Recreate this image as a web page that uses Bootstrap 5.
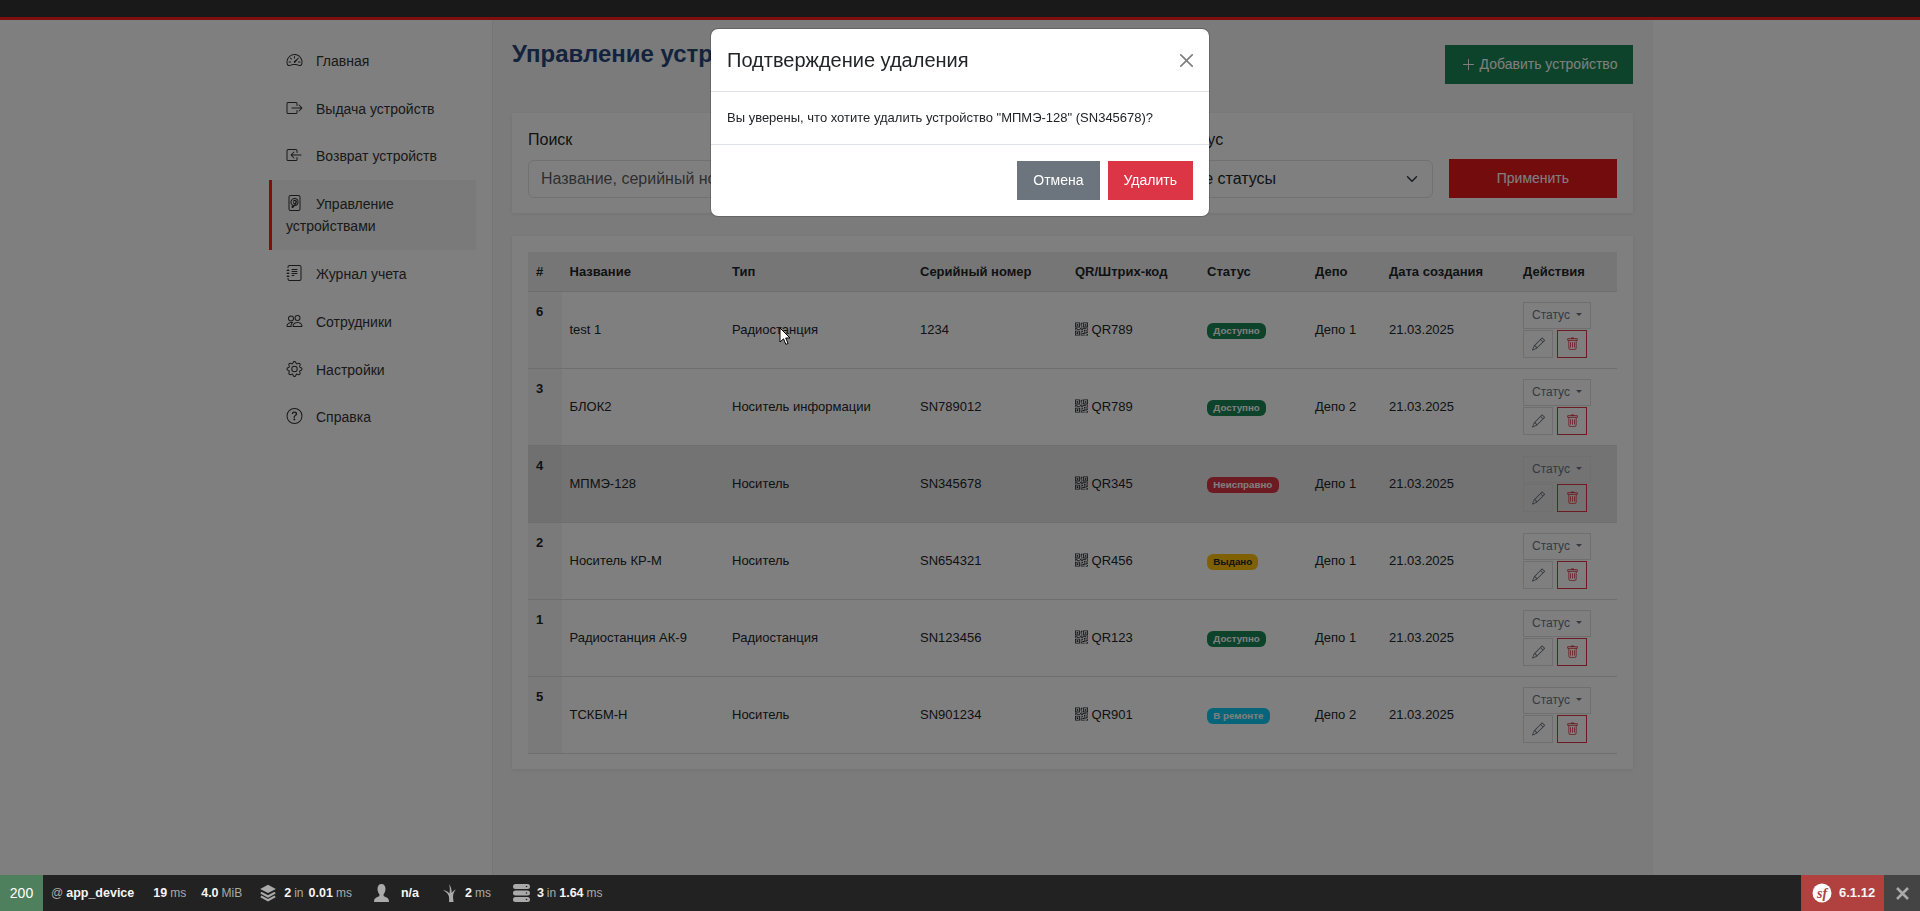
<!DOCTYPE html>
<html lang="ru">
  <head>
    <meta charset="UTF-8" />
    <meta name="viewport" content="width=device-width, initial-scale=1.0" />
    <title>Управление устройствами</title>
    <link rel="stylesheet" href="https://cdn.jsdelivr.net/npm/bootstrap@5.3.0/dist/css/bootstrap.min.css" />
    <style>
      html, body {
        height: 100%;
        overflow: hidden;
      }
      body {
        font-family: "Liberation Sans", Arial, sans-serif;
        background-color: #fff;
        color: #212529;
      }
      .top-strip {
        height: 20px;
        background-color: #333;
        border-bottom: 3px solid #fa1e1e;
      }
      .page-wrap {
        height: 891px;
      }
      .side-col {
        width: 493px;
        padding: 17px 16px 0 269px;
        background-color: #fff;
        border-right: 1px solid #eaeaea;
      }
      .side-link {
        display: block;
        padding: 12.9px 14px 12.9px 14px;
        border-left: 3px solid transparent;
        font-size: 14px;
        line-height: 22px;
        color: #333;
        text-decoration: none;
      }
      .side-link.is-active {
        background-color: #f5f5f5;
        border-left-color: #fa1e1e;
      }
      .side-link svg {
        width: 17px;
        height: 16px;
        margin-right: 13px;
        vertical-align: -2px;
      }
      .main-col {
        width: 1160px;
        padding: 16px 20px 0 19px;
        background-color: #f6f6f6;
      }
      .page-title {
        font-size: 24px;
        font-weight: 700;
        line-height: 36px;
        margin: 0;
        color: #28477a;
      }
      .head-row {
        margin-bottom: 29px;
      }
      .btn-flat {
        border-radius: 0;
        font-size: 14px;
        line-height: 21px;
        padding: 8px 15px;
      }
      .add-btn {
        margin-top: 9px;
        width: 188px;
      }
      .apply-btn {
        background-color: #e61919;
        border-color: #e61919;
        color: #fff;
      }
      .panel-box {
        background-color: #fff;
        border: 0;
        border-radius: 0;
        box-shadow: 0 1px 3px rgba(0, 0, 0, 0.08);
      }
      .filter-box {
        height: 100px;
        padding: 16px;
        margin-bottom: 23px;
      }
      .filter-box label {
        font-size: 16px;
        margin-bottom: 8px;
        line-height: 24px;
        display: block;
        margin-top: -1px;
      }
      .filter-box .form-control,
      .filter-box .form-select {
        height: 38px;
        font-size: 16px;
      }
      .table-box {
        padding: 16px 15px 15px 16px;
      }
      .dev-table {
        font-size: 13px;
        margin-bottom: 0;
        table-layout: fixed;
        width: 1089px;
      }
      .dev-table th,
      .dev-table td {
        padding: 10px 8px;
        line-height: 19.5px;
      }
      .dev-table thead th {
        background-color: #ededed;
        border-bottom: 1px solid #dcdcdc;
        line-height: 19px;
      }
      .dev-table thead th:nth-child(1) { width: 33.5px; }
      .dev-table thead th:nth-child(2) { width: 162.5px; }
      .dev-table thead th:nth-child(3) { width: 188px; }
      .dev-table thead th:nth-child(4) { width: 155px; }
      .dev-table thead th:nth-child(5) { width: 132px; }
      .dev-table thead th:nth-child(6) { width: 108px; }
      .dev-table thead th:nth-child(7) { width: 74px; }
      .dev-table thead th:nth-child(8) { width: 134px; }
      .dev-table thead th:nth-child(9) { width: 102px; }
      .dev-table tbody td {
        vertical-align: middle;
        background-color: transparent;
      }
      .dev-table tbody th {
        background-color: #f5f5f5;
      }
      .dev-table tbody tr {
        border-bottom: 1px solid #dcdcdc;
      }
      .dev-table tbody tr.row-hover td {
        background-color: #e6e6e6;
      }
      .dev-table tbody tr.row-hover th {
        background-color: #e0e0e0;
      }
      .qr-icon {
        width: 13px;
        height: 14px;
        vertical-align: -2px;
      }
      .act-stack {
        width: 72px;
        row-gap: 1px;
      }
      .act-btn {
        border: 1px solid #dedede;
        border-radius: 0;
        background-color: transparent;
        color: #6c757d;
        font-size: 12px;
        line-height: 18px;
        padding: 3px 0 4px 8px;
        height: 27px;
        width: 68px;
        text-align: left;
      }
      .act-btn.dropdown-toggle::after {
        margin-left: 6px;
      }
      .act-icon {
        width: 30px;
        height: 28px;
        padding: 0;
        display: flex;
        align-items: center;
        justify-content: center;
      }
      .act-icon svg {
        width: 13px;
        height: 14px;
      }
      .act-del {
        border-color: #dc3545;
        color: #dc3545;
      }
      .dialog-text {
        font-size: 13px;
        line-height: 19.5px;
      }
      .modal-header .btn-close {
        font-size: 13px;
      }
      .sf-bar {
        position: fixed;
        z-index: 2000;
        left: 0;
        right: 0;
        bottom: 0;
        height: 36px;
        background-color: #222;
        color: #aaa;
        font-size: 12px;
        line-height: 36px;
        white-space: nowrap;
      }
      .sf-code {
        width: 43px;
        background-color: #4f805d;
        color: #fff;
        font-size: 14px;
        text-align: center;
      }
      .sf-item {
        display: flex;
        align-items: center;
        gap: 3px;
      }
      .sf-item b {
        color: #f5f5f5;
        font-size: 12.5px;
        font-weight: 700;
      }
      .sf-item svg {
        fill: #aaa;
      }
      .sf-route { margin-left: 8px; }
      .sf-time { margin-left: 19px; }
      .sf-mem { margin-left: 15px; }
      .sf-layers { margin-left: 17px; }
      .sf-layers b:last-of-type { margin-left: 2px; }
      .sf-user { margin-left: 21px; }
      .sf-twig { margin-left: 23px; }
      .sf-db { margin-left: 22px; }
      .sf-ver {
        width: 83px;
        background-color: #b0413e;
        color: #f5f5f5;
        font-size: 13px;
        font-weight: 700;
        gap: 7px;
        padding-left: 11px;
      }
      .sf-close {
        width: 36px;
        background-color: #444;
      }
      .mouse-cursor {
        position: fixed;
        z-index: 1060;
        left: 779px;
        top: 327px;
      }
    </style>
  </head>
  <body>
    <svg width="0" height="0" class="position-absolute">
      <symbol id="i-home" viewBox="0 0 16 16"><path d="M8 4a.5.5 0 0 1 .5.5V6a.5.5 0 0 1-1 0V4.5A.5.5 0 0 1 8 4zM3.732 5.732a.5.5 0 0 1 .707 0l.915.914a.5.5 0 1 1-.708.708l-.914-.915a.5.5 0 0 1 0-.707zM2 10a.5.5 0 0 1 .5-.5h1.586a.5.5 0 0 1 0 1H2.5A.5.5 0 0 1 2 10zm9.5 0a.5.5 0 0 1 .5-.5h1.5a.5.5 0 0 1 0 1H12a.5.5 0 0 1-.5-.5zm.754-4.246a.389.389 0 0 0-.527-.02L7.547 9.31a.91.91 0 1 0 1.302 1.258l3.434-4.297a.389.389 0 0 0-.029-.518z"/><path fill-rule="evenodd" d="M0 10a8 8 0 1 1 15.547 2.661c-.442 1.253-1.845 1.602-2.932 1.25C11.309 13.488 9.475 13 8 13c-1.474 0-3.31.488-4.615.911-1.087.352-2.49.003-2.932-1.25A7.988 7.988 0 0 1 0 10zm8-7a7 7 0 0 0-6.603 9.329c.203.575.923.876 1.68.63C4.397 12.533 6.358 12 8 12s3.604.532 4.923.96c.757.245 1.477-.056 1.68-.631A7 7 0 0 0 8 3z"/></symbol>
      <symbol id="i-out" viewBox="0 0 16 16"><path fill-rule="evenodd" d="M10 12.5a.5.5 0 0 1-.5.5h-8a.5.5 0 0 1-.5-.5v-9a.5.5 0 0 1 .5-.5h8a.5.5 0 0 1 .5.5v2a.5.5 0 0 0 1 0v-2A1.5 1.5 0 0 0 9.5 2h-8A1.5 1.5 0 0 0 0 3.5v9A1.5 1.5 0 0 0 1.5 14h8a1.5 1.5 0 0 0 1.5-1.5v-2a.5.5 0 0 0-1 0v2z"/><path fill-rule="evenodd" d="M15.854 8.354a.5.5 0 0 0 0-.708l-3-3a.5.5 0 0 0-.708.708L14.293 7.5H5.5a.5.5 0 0 0 0 1h8.793l-2.147 2.146a.5.5 0 0 0 .708.708l3-3z"/></symbol>
      <symbol id="i-in" viewBox="0 0 16 16"><path fill-rule="evenodd" d="M10 3.5a.5.5 0 0 0-.5-.5h-8a.5.5 0 0 0-.5.5v9a.5.5 0 0 0 .5.5h8a.5.5 0 0 0 .5-.5v-2a.5.5 0 0 1 1 0v2A1.5 1.5 0 0 1 9.5 14h-8A1.5 1.5 0 0 1 0 12.5v-9A1.5 1.5 0 0 1 1.5 2h8A1.5 1.5 0 0 1 11 3.5v2a.5.5 0 0 1-1 0v-2z"/><path fill-rule="evenodd" d="M4.146 8.354a.5.5 0 0 1 0-.708l3-3a.5.5 0 1 1 .708.708L5.707 7.5H14.5a.5.5 0 0 1 0 1H5.707l2.147 2.146a.5.5 0 0 1-.708.708l-3-3z"/></symbol>
      <symbol id="i-hdd" viewBox="0 0 16 16"><path d="M2 2a2 2 0 0 1 2-2h8a2 2 0 0 1 2 2v12a2 2 0 0 1-2 2H4a2 2 0 0 1-2-2V2Zm2-1a1 1 0 0 0-1 1v12a1 1 0 0 0 1 1h8a1 1 0 0 0 1-1V2a1 1 0 0 0-1-1H4Z"/><path d="M12 7a4 4 0 0 1-3.900 4l-1.200 1.700a1.100 1.100 0 0 1-1.600-1.600l.8-.6A4 4 0 1 1 12 7Zm-1 0a3 3 0 1 0-3.900 2.900l1.400-1A2 2 0 1 1 10 8l-.9 2A3 3 0 0 0 11 7ZM8 8a1 1 0 1 0 0-2 1 1 0 0 0 0 2Z"/></symbol>
      <symbol id="i-log" viewBox="0 0 16 16"><path d="M5 10.5a.5.5 0 0 1 .5-.5h2a.5.5 0 0 1 0 1h-2a.5.5 0 0 1-.5-.5zm0-2a.5.5 0 0 1 .5-.5h5a.5.5 0 0 1 0 1h-5a.5.5 0 0 1-.5-.5zm0-2a.5.5 0 0 1 .5-.5h5a.5.5 0 0 1 0 1h-5a.5.5 0 0 1-.5-.5zm0-2a.5.5 0 0 1 .5-.5h5a.5.5 0 0 1 0 1h-5a.5.5 0 0 1-.5-.5z"/><path d="M3 0h10a2 2 0 0 1 2 2v12a2 2 0 0 1-2 2H3a2 2 0 0 1-2-2v-1h1v1a1 1 0 0 0 1 1h10a1 1 0 0 0 1-1V2a1 1 0 0 0-1-1H3a1 1 0 0 0-1 1v1H1V2a2 2 0 0 1 2-2z"/><path d="M1 5v-.5a.5.5 0 0 1 1 0V5h.5a.5.5 0 0 1 0 1h-2a.5.5 0 0 1 0-1H1zm0 3v-.5a.5.5 0 0 1 1 0V8h.5a.5.5 0 0 1 0 1h-2a.5.5 0 0 1 0-1H1zm0 3v-.5a.5.5 0 0 1 1 0v.5h.5a.5.5 0 0 1 0 1h-2a.5.5 0 0 1 0-1H1z"/></symbol>
      <symbol id="i-people" viewBox="0 0 16 16"><path d="M15 14s1 0 1-1-1-4-5-4-5 3-5 4 1 1 1 1h8Zm-7.978-1A.261.261 0 0 1 7 12.996c.001-.264.167-1.03.76-1.72C8.312 10.629 9.282 10 11 10c1.717 0 2.687.63 3.24 1.276.593.69.758 1.457.76 1.72l-.008.002a.274.274 0 0 1-.014.002H7.022ZM11 7a2 2 0 1 0 0-4 2 2 0 0 0 0 4Zm3-2a3 3 0 1 1-6 0 3 3 0 0 1 6 0ZM6.936 9.28a5.88 5.88 0 0 0-1.23-.247A7.35 7.35 0 0 0 5 9c-4 0-5 3-5 4 0 .667.333 1 1 1h4.216A2.238 2.238 0 0 1 5 13c0-1.01.377-2.042 1.09-2.904.243-.294.526-.569.846-.816ZM4.92 10A5.493 5.493 0 0 0 4 13H1c0-.26.164-1.03.76-1.724.545-.636 1.492-1.256 3.16-1.275ZM1.5 5.5a3 3 0 1 1 6 0 3 3 0 0 1-6 0Zm3-2a2 2 0 1 0 0 4 2 2 0 0 0 0-4Z"/></symbol>
      <symbol id="i-gear" viewBox="0 0 16 16"><path d="M8 4.754a3.246 3.246 0 1 0 0 6.492 3.246 3.246 0 0 0 0-6.492zM5.754 8a2.246 2.246 0 1 1 4.492 0 2.246 2.246 0 0 1-4.492 0z"/><path d="M9.796 1.343c-.527-1.79-3.065-1.79-3.592 0l-.094.319a.873.873 0 0 1-1.255.52l-.292-.16c-1.64-.892-3.433.902-2.54 2.541l.159.292a.873.873 0 0 1-.52 1.255l-.319.094c-1.79.527-1.79 3.065 0 3.592l.319.094a.873.873 0 0 1 .52 1.255l-.16.292c-.892 1.64.901 3.434 2.541 2.54l.292-.159a.873.873 0 0 1 1.255.52l.094.319c.527 1.79 3.065 1.79 3.592 0l.094-.319a.873.873 0 0 1 1.255-.52l.292.16c1.64.893 3.434-.902 2.54-2.541l-.159-.292a.873.873 0 0 1 .52-1.255l.319-.094c1.79-.527 1.79-3.065 0-3.592l-.319-.094a.873.873 0 0 1-.52-1.255l.16-.292c.893-1.64-.902-3.433-2.541-2.54l-.292.159a.873.873 0 0 1-1.255-.52l-.094-.319zm-2.633.283c.246-.835 1.428-.835 1.674 0l.094.319a1.873 1.873 0 0 0 2.693 1.115l.291-.16c.764-.415 1.6.42 1.184 1.185l-.159.292a1.873 1.873 0 0 0 1.116 2.692l.318.094c.835.246.835 1.428 0 1.674l-.319.094a1.873 1.873 0 0 0-1.115 2.693l.16.291c.415.764-.42 1.6-1.185 1.184l-.291-.159a1.873 1.873 0 0 0-2.693 1.116l-.094.318c-.246.835-1.428.835-1.674 0l-.094-.319a1.873 1.873 0 0 0-2.692-1.115l-.292.16c-.764.415-1.6-.42-1.184-1.185l.159-.291A1.873 1.873 0 0 0 1.945 8.93l-.319-.094c-.835-.246-.835-1.428 0-1.674l.319-.094A1.873 1.873 0 0 0 3.06 4.377l-.16-.292c-.415-.764.42-1.6 1.185-1.184l.292.159a1.873 1.873 0 0 0 2.692-1.115l.094-.319z"/></symbol>
      <symbol id="i-help" viewBox="0 0 16 16"><path d="M8 15A7 7 0 1 1 8 1a7 7 0 0 1 0 14zm0 1A8 8 0 1 0 8 0a8 8 0 0 0 0 16z"/><path d="M5.255 5.786a.237.237 0 0 0 .241.247h.825c.138 0 .248-.113.266-.25.09-.656.54-1.134 1.342-1.134.686 0 1.314.343 1.314 1.168 0 .635-.374.927-.965 1.371-.673.489-1.206 1.06-1.168 1.987l.003.217a.25.25 0 0 0 .25.246h.811a.25.25 0 0 0 .25-.25v-.105c0-.718.273-.927 1.01-1.486.609-.463 1.244-.977 1.244-2.056 0-1.511-1.276-2.241-2.673-2.241-1.267 0-2.655.59-2.75 2.286zm1.557 5.763c0 .533.425.927 1.01.927.609 0 1.028-.394 1.028-.927 0-.552-.42-.94-1.029-.94-.584 0-1.009.388-1.009.94z"/></symbol>
      <symbol id="i-qr" viewBox="0 0 16 16"><path d="M2 2h2v2H2V2Z"/><path d="M6 0v6H0V0h6ZM5 1H1v4h4V1ZM4 12H2v2h2v-2Z"/><path d="M6 10v6H0v-6h6Zm-5 1v4h4v-4H1Zm11-9h2v2h-2V2Z"/><path d="M10 0v6h6V0h-6Zm5 1v4h-4V1h4ZM8 1V0h1v2H8v2H7V1h1Zm0 5V4h1v2H8ZM6 8V7h1V6h1v2h1V7h5v1h-4v1H7V8H6Zm0 0v1H2V8H1v1H0V7h3v1h3Zm10 1h-1V7h1v2Zm-1 0h-1v2h2v-1h-1V9Zm-4 0h2v1h-1v1h-1V9Zm2 3v-1h-1v1h-1v1H9v1h3v-2h1Zm0 0h3v1h-2v1h-1v-2Zm-4-1v1h1v-2H7v1h2Z"/><path d="M7 12h1v3h4v1H7v-4Zm9 2v2h-3v-1h2v-1h1Z"/></symbol>
      <symbol id="i-pencil" viewBox="0 0 16 16"><path d="M12.146.146a.5.5 0 0 1 .708 0l3 3a.5.5 0 0 1 0 .708l-10 10a.5.5 0 0 1-.168.11l-5 2a.5.5 0 0 1-.65-.65l2-5a.5.5 0 0 1 .11-.168l10-10zM11.207 2.5 13.5 4.793 14.793 3.5 12.5 1.207 11.207 2.5zm1.586 3L10.5 3.207 4 9.707V10h.5a.5.5 0 0 1 .5.5v.5h.5a.5.5 0 0 1 .5.5v.5h.293l6.5-6.5zm-9.761 5.175-.106.106-1.528 3.821 3.821-1.528.106-.106A.5.5 0 0 1 5 12.5V12h-.5a.5.5 0 0 1-.5-.5V11h-.5a.5.5 0 0 1-.468-.325z"/></symbol>
      <symbol id="i-trash" viewBox="0 0 16 16"><path d="M5.5 5.5A.5.5 0 0 1 6 6v6a.5.5 0 0 1-1 0V6a.5.5 0 0 1 .5-.5zm2.5 0a.5.5 0 0 1 .5.5v6a.5.5 0 0 1-1 0V6a.5.5 0 0 1 .5-.5zm3 .5a.5.5 0 0 0-1 0v6a.5.5 0 0 0 1 0V6z"/><path fill-rule="evenodd" d="M14.5 3a1 1 0 0 1-1 1H13v9a2 2 0 0 1-2 2H5a2 2 0 0 1-2-2V4h-.5a1 1 0 0 1-1-1V2a1 1 0 0 1 1-1H6a1 1 0 0 1 1-1h2a1 1 0 0 1 1 1h3.5a1 1 0 0 1 1 1v1zM4.118 4 4 4.059V13a1 1 0 0 0 1 1h6a1 1 0 0 0 1-1V4.059L11.882 4H4.118zM2.5 3V2h11v1h-11z"/></symbol>
    </svg>

    <div class="top-strip"></div>
    <div class="page-wrap d-flex">
      <div class="side-col" id="side-menu"></div>
      <div class="main-col">
        <div class="head-row d-flex justify-content-between align-items-start">
          <h2 class="page-title">Управление устройствами</h2>
          <button class="btn btn-success btn-flat add-btn d-flex align-items-center gap-1 text-nowrap px-2 justify-content-center">
            <svg width="15" height="15" viewBox="0 0 16 16" fill="currentColor"><path fill-rule="evenodd" d="M8 2a.5.5 0 0 1 .5.5v5h5a.5.5 0 0 1 0 1h-5v5a.5.5 0 0 1-1 0v-5h-5a.5.5 0 0 1 0-1h5v-5A.5.5 0 0 1 8 2Z"/></svg>
            Добавить устройство
          </button>
        </div>

        <div class="panel-box filter-box">
          <div class="row g-3">
            <div class="col-4">
              <label for="f-search">Поиск</label>
              <input id="f-search" class="form-control" placeholder="Название, серийный номер..." />
            </div>
            <div class="col-3">
              <label for="f-type">Тип</label>
              <select id="f-type" class="form-select"><option>Все типы</option></select>
            </div>
            <div class="col-3">
              <label for="f-status">Статус</label>
              <select id="f-status" class="form-select"><option>Все статусы</option></select>
            </div>
            <div class="col-2 d-flex align-items-end">
              <button class="btn btn-flat apply-btn w-100">Применить</button>
            </div>
          </div>
        </div>

        <div class="panel-box table-box">
          <table class="table dev-table">
            <thead>
              <tr>
                <th>#</th><th>Название</th><th>Тип</th><th>Серийный номер</th><th>QR/Штрих-код</th><th>Статус</th><th>Депо</th><th>Дата создания</th><th>Действия</th>
              </tr>
            </thead>
            <tbody id="dev-rows"></tbody>
          </table>
        </div>
      </div>
    </div>

    <!-- затемнение и окно подтверждения -->
    <div class="modal-backdrop show"></div>
    <div class="modal d-block">
      <div class="modal-dialog">
        <div class="modal-content">
          <div class="modal-header">
            <h5 class="modal-title">Подтверждение удаления</h5>
            <button type="button" class="btn-close" aria-label="Close"></button>
          </div>
          <div class="modal-body dialog-text">Вы уверены, что хотите удалить устройство "МПМЭ-128" (SN345678)?</div>
          <div class="modal-footer">
            <button class="btn btn-secondary btn-flat">Отмена</button>
            <button class="btn btn-danger btn-flat">Удалить</button>
          </div>
        </div>
      </div>
    </div>

    <svg class="mouse-cursor" width="12" height="19" viewBox="0 0 12 19">
      <path d="M1 1v14l3.500-3.200 2.400 5.600 2.200-1-2.400-5.400H11Z" fill="#fff" stroke="#000" stroke-width="1" />
    </svg>

    <!-- панель Symfony -->
    <div class="sf-bar d-flex">
      <div class="sf-code">200</div>
      <div class="sf-item sf-route"><span>@</span><b>app_device</b></div>
      <div class="sf-item sf-time"><b>19</b><span>ms</span></div>
      <div class="sf-item sf-mem"><b>4.0</b><span>MiB</span></div>
      <div class="sf-item sf-layers">
        <svg width="18" height="20" viewBox="0 0 24 26"><path d="M12 2 1.500 7.500 12 13l10.500-5.500Z"/><path d="M2.500 12.500 12 17.500l9.500-5M2.500 17.500 12 22.500l9.500-5" fill="none" stroke="#aaa" stroke-width="3"/></svg>
        <b class="ms-1">2</b><span>in</span><b>0.01</b><span>ms</span>
      </div>
      <div class="sf-item sf-user">
        <svg width="17" height="20" viewBox="0 0 17 20"><path d="M8.500 1C5.800 1 4.500 3 4.500 6c0 2.500 1.200 4.500 2 5.500 0 1.500-.5 2-2 2.500C2 15 1 16 1 19h15c0-3-1-4-3.500-5-1.500-.5-2-1-2-2.500.8-1 2-3 2-5.500 0-3-1.300-5-4-5Z"/></svg>
        <b class="ms-2">n/a</b>
      </div>
      <div class="sf-item sf-twig">
        <svg width="16" height="20" viewBox="0 0 16 20"><path d="M7 19c.5-4 0-7-2-9 0 0-2-2-4-3 3 .5 5 1.500 6.500 3.500C8 7 8 4 7 1c2 2.500 2.800 6 2.700 9 .6-1 1.800-2.500 4.300-3.500-2 2-3 4.500-3 7.500l.5 5Z"/></svg>
        <b class="ms-1">2</b><span>ms</span>
      </div>
      <div class="sf-item sf-db">
        <svg width="17" height="20" viewBox="0 0 17 20"><path fill-rule="evenodd" d="M2.500 1h12a2.500 2.500 0 0 1 0 5h-12a2.500 2.500 0 0 1 0-5Zm11 1.700a.8.8 0 1 0 0 1.600.8.8 0 0 0 0-1.600ZM2.500 7.500h12a2.500 2.500 0 0 1 0 5h-12a2.500 2.500 0 0 1 0-5Zm11 1.700a.8.8 0 1 0 0 1.600.8.8 0 0 0 0-1.600ZM2.500 14h12a2.500 2.500 0 0 1 0 5h-12a2.500 2.500 0 0 1 0-5Zm11 1.700a.8.8 0 1 0 0 1.600.8.8 0 0 0 0-1.600Z"/></svg>
        <b class="ms-1">3</b><span>in</span><b>1.64</b><span>ms</span>
      </div>
      <div class="sf-ver d-flex align-items-center ms-auto">
        <svg width="20" height="20" viewBox="0 0 20 20">
          <circle cx="10" cy="10" r="9.500" fill="#fff" />
          <text x="10" y="14.500" text-anchor="middle" font-family="Liberation Serif, serif" font-style="italic" font-weight="700" font-size="14" fill="#b0413e">sf</text>
        </svg>
        <span>6.1.12</span>
      </div>
      <div class="sf-close d-flex align-items-center justify-content-center">
        <svg width="15" height="15" viewBox="0 0 15 15"><path d="M2 2l11 11M13 2 2 13" stroke="#aaa" stroke-width="2.500" fill="none" /></svg>
      </div>
    </div>

    <script src="https://cdn.jsdelivr.net/npm/bootstrap@5.3.0/dist/js/bootstrap.bundle.min.js"></script>
    <script>
      const menu = [
        ['i-home', 'Главная'],
        ['i-out', 'Выдача устройств'],
        ['i-in', 'Возврат устройств'],
        ['i-hdd', 'Управление устройствами', true],
        ['i-log', 'Журнал учета'],
        ['i-people', 'Сотрудники'],
        ['i-gear', 'Настройки'],
        ['i-help', 'Справка']
      ];
      document.getElementById('side-menu').innerHTML = menu.map(m => `
        <a href="#" class="side-link ${m[2] ? 'is-active' : ''}">
          <svg fill="currentColor"><use href="#${m[0]}"></use></svg>${m[1]}
        </a>`).join('');

      const devices = [
        [6, 'test 1', 'Радиостанция', '1234', 'QR789', 'Доступно', 'bg-success', 'Депо 1'],
        [3, 'БЛОК2', 'Носитель информации', 'SN789012', 'QR789', 'Доступно', 'bg-success', 'Депо 2'],
        [4, 'МПМЭ-128', 'Носитель', 'SN345678', 'QR345', 'Неисправно', 'bg-danger', 'Депо 1'],
        [2, 'Носитель КР-М', 'Носитель', 'SN654321', 'QR456', 'Выдано', 'bg-warning text-dark', 'Депо 1'],
        [1, 'Радиостанция АК-9', 'Радиостанция', 'SN123456', 'QR123', 'Доступно', 'bg-success', 'Депо 1'],
        [5, 'ТСКБМ-Н', 'Носитель', 'SN901234', 'QR901', 'В ремонте', 'bg-info', 'Депо 2']
      ];
      document.getElementById('dev-rows').innerHTML = devices.map(d => `
        <tr class="${d[0] === 4 ? 'row-hover' : ''}">
          <th>${d[0]}</th>
          <td>${d[1]}</td>
          <td>${d[2]}</td>
          <td>${d[3]}</td>
          <td><svg class="qr-icon" fill="currentColor"><use href="#i-qr"></use></svg> ${d[4]}</td>
          <td><span class="badge ${d[6]}">${d[5]}</span></td>
          <td>${d[7]}</td>
          <td>21.03.2025</td>
          <td>
            <div class="act-stack d-flex flex-column align-items-start">
              <button class="act-btn dropdown-toggle">Статус</button>
              <div class="d-flex gap-1">
                <button class="act-btn act-icon"><svg fill="currentColor"><use href="#i-pencil"></use></svg></button>
                <button class="act-btn act-icon act-del"><svg fill="currentColor"><use href="#i-trash"></use></svg></button>
              </div>
            </div>
          </td>
        </tr>`).join('');
    </script>
  </body>
</html>
